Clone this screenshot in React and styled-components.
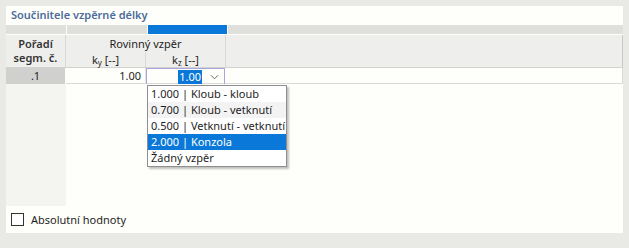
import styled, { createGlobalStyle } from 'styled-components'

const GlobalStyle = createGlobalStyle`
  html, body {
    margin: 0;
    padding: 0;
    background: #e9e9e5;
  }
  body {
    font-family: "Noto Sans", "Open Sans", sans-serif;
    font-size: 11px;
    color: #1e1e1e;
  }
`

const options = [
  { label: '1.000 | Kloub - kloub' },
  { label: '0.700 | Kloub - vetknutí', hover: true },
  { label: '0.500 | Vetknutí - vetknutí' },
  { label: '2.000 | Konzola', selected: true },
  { label: 'Žádný vzpěr' },
]

const COLS = '60px 80px 79px 1fr'

const App = () => (
  <>
    <GlobalStyle />
    <Frame>
      <Panel>
        <Title>Součinitele vzpěrné délky</Title>
        <Table>
          <Band>
            <BandCell />
            <BandCell />
            <BandCell $active />
            <BandCell />
          </Band>
          <Header>
            <OrderHead>
              <span>Pořadí</span>
              <span>segm. č.</span>
            </OrderHead>
            <GroupHead>
              <GroupTitle>Rovinný vzpěr</GroupTitle>
              <SubHeads>
                <SubHead>k<sub>y</sub> [--]</SubHead>
                <SubHead>k<sub>z</sub> [--]</SubHead>
              </SubHeads>
            </GroupHead>
            <RestHead />
          </Header>
          <Row>
            <OrderCell>.1</OrderCell>
            <ValueCell>1.00</ValueCell>
            <EditCell>
              <Selected>1.00</Selected>
              <Chevron viewBox="0 0 10 6">
                <path d="M1 1l4 4 4-4" fill="none" stroke="#555" strokeWidth="1" />
              </Chevron>
              <Dropdown>
                {options.map((o, k) => (
                  <Option key={k} $hover={o.hover} $selected={o.selected}>
                    {o.label}
                  </Option>
                ))}
              </Dropdown>
            </EditCell>
            <RestCell />
          </Row>
          <Body>
            <OrderFill />
          </Body>
        </Table>
        <Footer>
          <Check />
          <span>Absolutní hodnoty</span>
        </Footer>
      </Panel>
    </Frame>
  </>
)

const Frame = styled.div`
  width: 629px;
  height: 248px;
  padding: 6px 6px 0 6px;
  box-sizing: border-box;
`

const Panel = styled.div`
  width: 617px;
  height: 227px;
  background: #fefefa;
  display: flex;
  flex-direction: column;
`

const Title = styled.div`
  height: 19px;
  padding: 0 0 0 5px;
  line-height: 18px;
  font-weight: 600;
  color: #4c6c9a;
`

const Table = styled.div`
  flex: 1;
  display: flex;
  flex-direction: column;
`

const Band = styled.div`
  display: grid;
  grid-template-columns: ${COLS};
  column-gap: 1px;
  height: 9px;
`

const BandCell = styled.div`
  background: ${p => (p.$active ? '#0a78d8' : '#dfdfdc')};
`

const Header = styled.div`
  display: grid;
  grid-template-columns: 60px 160px 1fr;
  height: 32px;
  margin-top: 1px;
  background: #eeeeec;
  border-bottom: 1px solid #d2d2d0;
  border-right: 1px solid #c8c8c6;
`

const OrderHead = styled.div`
  display: flex;
  flex-direction: column;
  align-items: center;
  justify-content: center;
  font-weight: 600;
  color: #333;
  line-height: 14px;
  border-right: 1px solid #d8d8d6;
`

const GroupHead = styled.div`
  display: flex;
  flex-direction: column;
  border-right: 1px solid #d8d8d6;
`

const GroupTitle = styled.div`
  height: 17px;
  line-height: 18px;
  text-align: center;
`

const SubHeads = styled.div`
  flex: 1;
  display: grid;
  grid-template-columns: 80px 79px;
`

const SubHead = styled.div`
  text-align: center;
  line-height: 15px;
  &:first-child {
    border-right: 1px solid #d8d8d6;
  }
  sub {
    font-size: 8px;
    vertical-align: -2px;
    line-height: 0;
  }
`

const RestHead = styled.div``

const Row = styled.div`
  display: grid;
  grid-template-columns: ${COLS};
  height: 15px;
  border-bottom: 1px solid #dadad8;
  border-right: 1px solid #dadad8;
`

const OrderCell = styled.div`
  background: #d0d0ce;
  text-align: center;
  line-height: 15px;
  border-right: 1px solid #fefefa;
`

const ValueCell = styled.div`
  text-align: right;
  padding-right: 4px;
  line-height: 15px;
  border-right: 1px solid #e2e2e0;
`

const EditCell = styled.div`
  position: relative;
  box-sizing: border-box;
  border: 1px solid #a9a6de;
  border-bottom: none;
  height: 16px;
  display: flex;
  align-items: center;
  justify-content: flex-end;
  padding-right: 5px;
`

const Selected = styled.span`
  background: #0a78d8;
  color: #fff;
  line-height: 14px;
  padding: 0 1px;
  margin-right: 8px;
`

const Chevron = styled.svg`
  width: 9px;
  height: 6px;
`

const Dropdown = styled.div`
  position: absolute;
  top: 16px;
  left: 0;
  width: 138px;
  background: #fff;
  border: 1px solid #8f8f8f;
  box-shadow: 2px 2px 2px rgba(0, 0, 0, 0.25);
  z-index: 2;
`

const Option = styled.div`
  height: 16px;
  line-height: 16px;
  padding-left: 3px;
  white-space: nowrap;
  background: ${p => (p.$selected ? '#0a78d8' : p.$hover ? '#f3f3f3' : '#fff')};
  color: ${p => (p.$selected ? '#fff' : '#1e1e1e')};
`

const RestCell = styled.div``

const Body = styled.div`
  flex: 1;
  display: flex;
`

const OrderFill = styled.div`
  width: 60px;
  background: #f4f4f0;
`

const Footer = styled.div`
  height: 27px;
  display: flex;
  align-items: center;
  gap: 7px;
  padding-left: 5px;
`

const Check = styled.span`
  width: 11px;
  height: 11px;
  border: 1px solid #333;
  background: #fff;
`

export default App
